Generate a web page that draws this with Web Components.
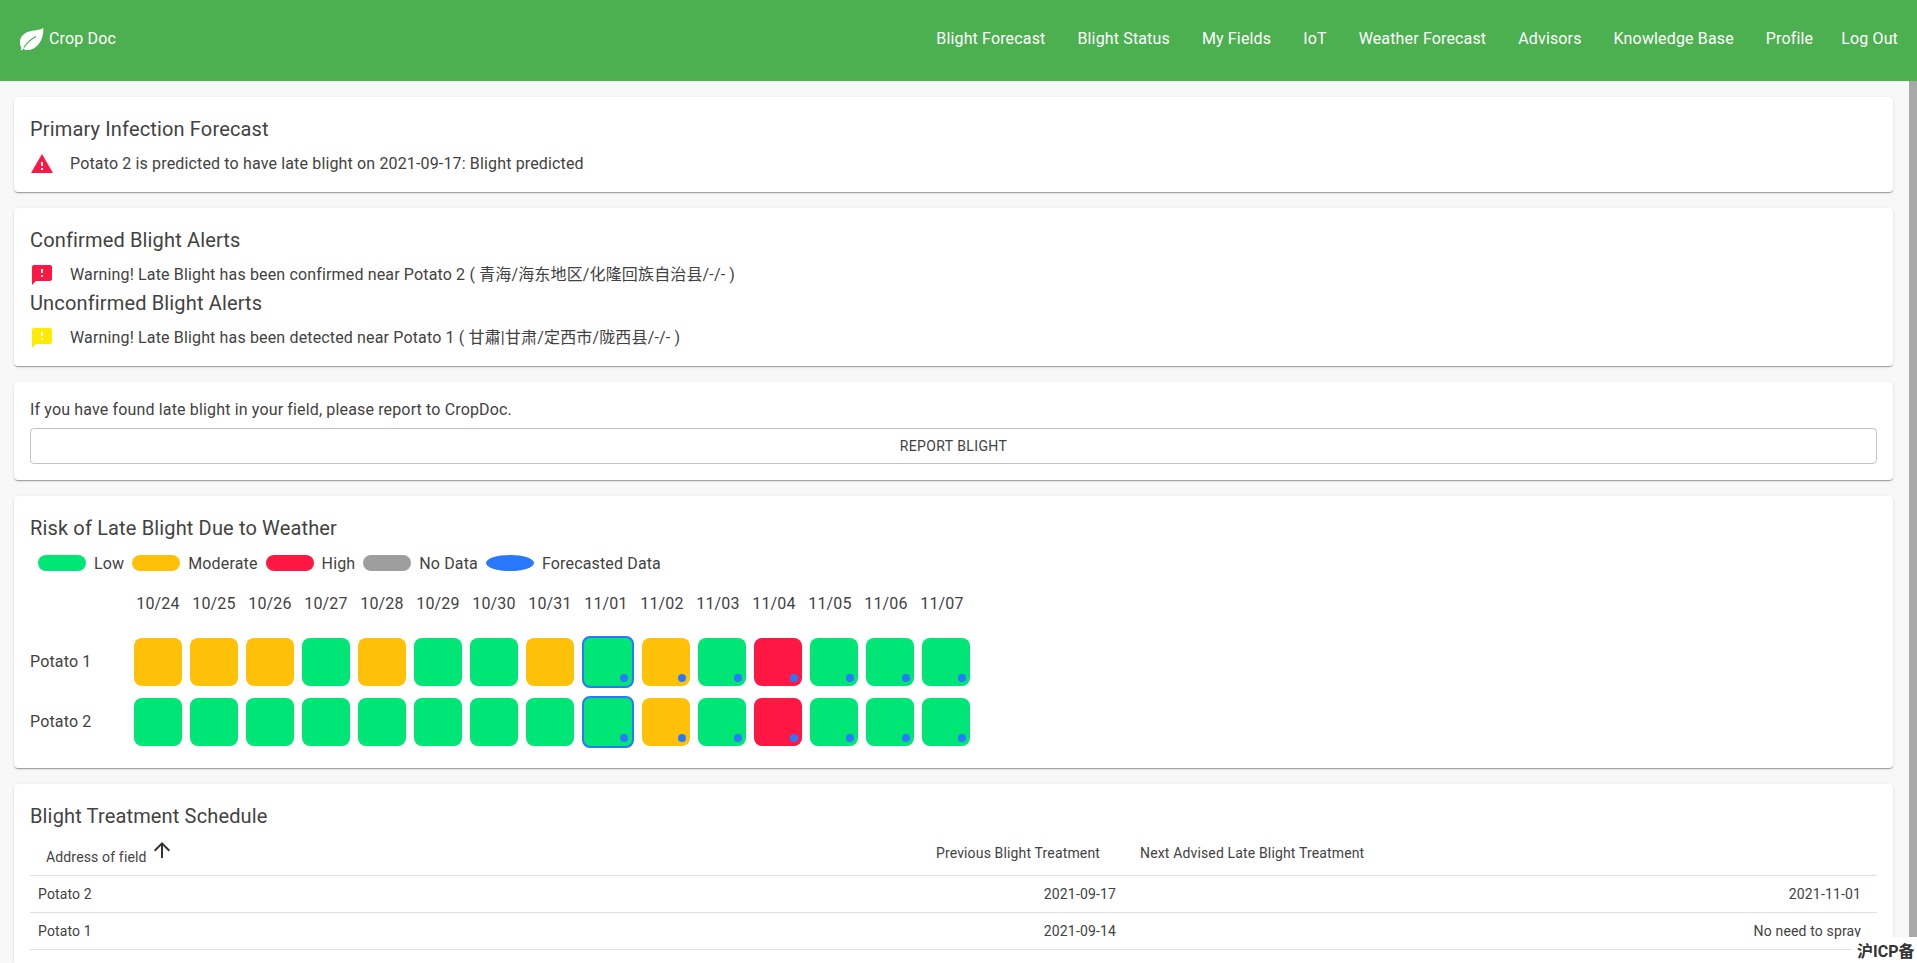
<!DOCTYPE html>
<html><head><meta charset="utf-8">
<style>
html,body{margin:0;height:100%;overflow:hidden}
body{font-family:Roboto,"Noto Sans CJK SC",sans-serif;color:#424242;font-size:16px;letter-spacing:.15px;display:flex;flex-direction:column;background:#f8f8f8}
</style></head><body>
<template id="t-bar"><style>
:host{display:flex;height:81px;background:#4caf50;color:#fff;box-sizing:border-box;padding:0 19px 5px 20px;align-items:center;flex:none;justify-content:space-between;position:relative;z-index:2}
.b{display:flex;align-items:center;gap:5px}
svg{width:24px;height:24px;display:block;margin-top:2px}
nav{display:flex;gap:32px}
nav span:last-child{margin-left:-4px}
</style><div class="b"><svg viewBox="0 0 24 24"><path fill="#fff" d="M23.3 1C19.5 3.5 13 3 8.3 4.7 3 6.6 0 10.5 0 14.7 0 17 .4 19.5 1.5 21L.7 23l1.3.4 1.2-1.9C4.5 22.6 5.5 23 6.7 23 11 23.3 15 21.3 18 18 21.7 14 23.8 7 23.3 1z"/><path fill="none" stroke="#4caf50" stroke-width="1.2" d="M4 20.5C6.5 16 10.5 12.5 16 9.5"/></svg><span>Crop Doc</span></div>
<nav><span>Blight Forecast</span><span>Blight Status</span><span>My Fields</span><span>IoT</span><span>Weather Forecast</span><span>Advisors</span><span>Knowledge Base</span><span>Profile</span><span>Log Out</span></nav></template>

<template id="t-card"><style>
:host{display:block;background:#fff;border-radius:4px;padding:16px;box-shadow:0 2px 1px -1px rgba(0,0,0,.2),0 1px 1px 0 rgba(0,0,0,.14),0 1px 3px 0 rgba(0,0,0,.12)}
</style><slot></slot></template>

<template id="t-title"><style>
:host{display:block;font-size:20px;line-height:32px}
</style><slot></slot></template>

<template id="t-alert"><style>
:host{display:flex;align-items:center;gap:16px;height:24px;margin-top:7px;line-height:24px}
svg{width:24px;height:24px;display:block;flex:none}
</style><svg viewBox="0 0 24 24"><path id="p"/></svg><span><slot></slot></span></template>

<template id="t-btn"><style>
:host{display:flex;align-items:center;justify-content:center;height:36px;box-sizing:border-box;margin-top:6px;border:1px solid rgba(0,0,0,.23);border-radius:4px;font-size:14px;letter-spacing:.4px;text-transform:uppercase}
</style><slot></slot></template>

<template id="t-legend"><style>
:host{display:flex;align-items:center;height:20px;margin-top:9px}
i{display:block;width:48px;height:16px;border-radius:8px;margin:0 8px}
i.e{border-radius:50%}
</style><i style="background:#00e676"></i><span>Low</span><i style="background:#ffc107"></i><span>Moderate</span><i style="background:#ff1744"></i><span>High</span><i style="background:#9e9e9e"></i><span>No Data</span><i class="e" style="background:#2979ff"></i><span>Forecasted Data</span></template>

<template id="t-dates"><style>
:host{display:flex;height:24px;margin-top:19px;padding-left:104px;gap:8px}
span{width:48px;display:flex;justify-content:center;line-height:24px}
</style></template>

<template id="t-row"><style>
:host{display:flex;align-items:center;height:52px;gap:8px}
.l{width:96px;flex:none;margin-bottom:2px}
</style><span class="l"><slot></slot></span></template>

<template id="t-cell"><style>
:host{display:block;box-sizing:content-box;width:48px;height:48px;border-radius:8px;position:relative;flex:none}
:host([today]){border:2px solid #2979ff}
i{position:absolute;right:4px;bottom:4px;width:8px;height:8px;border-radius:50%;background:#2979ff}
</style></template>

<template id="t-table"><style>
:host{display:grid;grid-template-columns:1103px 1fr;font-size:14px}
div{border-bottom:1px solid #e0e0e0;box-sizing:border-box;display:flex;align-items:center}
.h{height:44px}
.r{height:37px}
.h1{padding-left:16px}
.h1 .a{display:flex;align-items:center;margin-right:auto}
.h1 .a b{font-weight:400;position:relative;top:3.5px}
svg{width:24px;height:24px;margin-left:3px;position:relative;top:-3.5px;fill:#333}
.p{margin:0 33px 1px 0}
.h2{padding-left:7px;padding-bottom:1px}
.c1{padding-left:8px;justify-content:space-between}
.c1 span:last-child{margin-right:17px}
.c2{justify-content:flex-end;padding-right:16px}
</style></template>

<template id="t-scroll"><style>
:host{display:block;flex:1;min-height:0;position:relative}
.w{display:flex;height:100%}
main{flex:1;min-width:0;overflow:hidden;box-sizing:border-box;padding:16px 16px 0 14px;display:flex;flex-direction:column;gap:16px}
.t{width:8px;background:#a8a8a8;flex:none}
</style><div class="w"><main><slot></slot></main><div class="t"></div></div></template>

<template id="t-badge"><style>
:host{position:fixed;right:0;bottom:0;height:26px;width:65px;background:#fff;font-weight:700;font-size:16px;letter-spacing:0;display:flex;align-items:center;padding-left:5px;box-sizing:border-box;color:#333;z-index:5;border-top-left-radius:4px}
</style><slot></slot></template>

<crop-bar></crop-bar>
<crop-scroll>
<crop-card><crop-title>Primary Infection Forecast</crop-title>
<crop-alert icon="warn" color="#ff1744">Potato 2 is predicted to have late blight on 2021-09-17: Blight predicted</crop-alert></crop-card>
<crop-card><crop-title>Confirmed Blight Alerts</crop-title>
<crop-alert icon="sms" color="#ff1744">Warning! Late Blight has been confirmed near Potato 2 ( 青海/海东地区/化隆回族自治县/-/- )</crop-alert>
<crop-title>Unconfirmed Blight Alerts</crop-title>
<crop-alert icon="sms" color="#ffea00">Warning! Late Blight has been detected near Potato 1 ( 甘肅|甘肃/定西市/陇西县/-/- )</crop-alert></crop-card>
<crop-card><div style="line-height:24px">If you have found late blight in your field, please report to CropDoc.</div><crop-btn>Report Blight</crop-btn></crop-card>
<crop-card style="padding-bottom:20px"><crop-title>Risk of Late Blight Due to Weather</crop-title>
<crop-legend></crop-legend>
<crop-dates></crop-dates>
<crop-row style="margin-top:20px" cells="a a a g a g g a g a g r g g g">Potato 1</crop-row>
<crop-row style="margin-top:8px" cells="g g g g g g g g g a g r g g g">Potato 2</crop-row>
</crop-card>
<crop-card style="flex:none"><crop-title>Blight Treatment Schedule</crop-title><crop-table></crop-table></crop-card>
</crop-scroll>
<crop-badge>沪ICP备</crop-badge>
<script>
function root(el,id){const s=el.attachShadow({mode:'open'});s.appendChild(document.getElementById(id).content.cloneNode(true));return s}
const simple=(n,id)=>customElements.define(n,class extends HTMLElement{constructor(){super();root(this,id)}});
simple('crop-bar','t-bar');simple('crop-card','t-card');simple('crop-title','t-title');simple('crop-btn','t-btn');simple('crop-legend','t-legend');simple('crop-scroll','t-scroll');simple('crop-badge','t-badge');
const ICONS={warn:'M1 21h22L12 2 1 21zm12-3h-2v-2h2v2zm0-4h-2v-4h2v4z',sms:'M20 2H4c-1.1 0-1.99.9-1.99 2L2 22l4-4h14c1.1 0 2-.9 2-2V4c0-1.1-.9-2-2-2zm-7 12h-2v-2h2v2zm0-4h-2V6h2v4z'};
customElements.define('crop-alert',class extends HTMLElement{constructor(){super();root(this,'t-alert')}
connectedCallback(){const p=this.shadowRoot.getElementById('p');p.setAttribute('d',ICONS[this.getAttribute('icon')]);p.setAttribute('fill',this.getAttribute('color'))}});
customElements.define('crop-dates',class extends HTMLElement{constructor(){super();const s=root(this,'t-dates');
['10/24','10/25','10/26','10/27','10/28','10/29','10/30','10/31','11/01','11/02','11/03','11/04','11/05','11/06','11/07'].forEach(d=>{const e=document.createElement('span');e.textContent=d;s.appendChild(e)})}});
const COL={a:'#ffc107',g:'#00e676',r:'#ff1744'};
customElements.define('crop-cell',class extends HTMLElement{constructor(){super();root(this,'t-cell')}
connectedCallback(){this.style.background=COL[this.getAttribute('c')];if(this.hasAttribute('dot')&&!this.shadowRoot.querySelector('i'))this.shadowRoot.appendChild(document.createElement('i'))}});
customElements.define('crop-row',class extends HTMLElement{constructor(){super();root(this,'t-row')}
connectedCallback(){const s=this.shadowRoot;if(s.querySelector('crop-cell'))return;this.getAttribute('cells').split(' ').forEach((c,i)=>{const e=document.createElement('crop-cell');e.setAttribute('c',c);if(i>=8)e.setAttribute('dot','');if(i==8)e.setAttribute('today','');s.appendChild(e)})}});
customElements.define('crop-table',class extends HTMLElement{constructor(){super();const s=root(this,'t-table');
const arrow='<svg viewBox="0 0 24 24"><path d="M4 12l1.41 1.41L11 7.83V20h2V7.83l5.58 5.59L20 12l-8-8-8 8z"/></svg>';
const h=document.createElement('template');
h.innerHTML=`<div class="h h1"><span class="a"><b>Address of field</b>${arrow}</span><span class="p">Previous Blight Treatment</span></div><div class="h h2">Next Advised Late Blight Treatment</div>
<div class="r c1"><span>Potato 2</span><span>2021-09-17</span></div><div class="r c2">2021-11-01</div>
<div class="r c1"><span>Potato 1</span><span>2021-09-14</span></div><div class="r c2">No need to spray</div>`;
s.appendChild(h.content)}});
</script>
</body></html>
